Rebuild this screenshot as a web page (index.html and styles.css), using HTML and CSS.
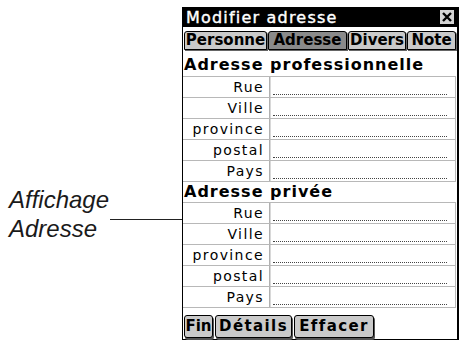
FILE: index.html
```html
<!DOCTYPE html>
<html lang="fr">
<head>
<meta charset="utf-8">
<title>Modifier adresse</title>
<link rel="stylesheet" href="styles.css">
</head>
<body>
<div class="page">
  <div class="note">
    <div class="note-line1"><span>Affichage</span><span class="leader"></span></div>
    <div class="note-line2">Adresse</div>
  </div>
  <div class="panel">
    <div class="titlebar">
      <span class="title">Modifier adresse</span>
      <svg class="close" width="14" height="14" viewBox="0 0 14 14"><rect x="0" y="0" width="14" height="14" fill="#d4d4d4"/><path d="M3 3 L11 11 M11 3 L3 11" stroke="#000" stroke-width="2.4"/></svg>
    </div>
    <div class="tabs">
      <div class="tab t1">Personne</div>
      <div class="tab t2 active">Adresse</div>
      <div class="tab t3">Divers</div>
      <div class="tab t4">Note</div>
    </div>
    <div class="section-head first">Adresse professionnelle</div>
    <div class="rows">
      <div class="row"><div class="label">Rue</div><div class="value"><span class="dots"></span></div></div>
      <div class="row"><div class="label">Ville</div><div class="value"><span class="dots"></span></div></div>
      <div class="row"><div class="label">province</div><div class="value"><span class="dots"></span></div></div>
      <div class="row"><div class="label">postal</div><div class="value"><span class="dots"></span></div></div>
      <div class="row"><div class="label">Pays</div><div class="value"><span class="dots"></span></div></div>
    </div>
    <div class="section-head">Adresse privée</div>
    <div class="rows">
      <div class="row"><div class="label">Rue</div><div class="value"><span class="dots"></span></div></div>
      <div class="row"><div class="label">Ville</div><div class="value"><span class="dots"></span></div></div>
      <div class="row"><div class="label">province</div><div class="value"><span class="dots"></span></div></div>
      <div class="row"><div class="label">postal</div><div class="value"><span class="dots"></span></div></div>
      <div class="row"><div class="label">Pays</div><div class="value"><span class="dots"></span></div></div>
    </div>
    <div class="buttons">
      <div class="btn b1">Fin</div>
      <div class="btn b2">Détails</div>
      <div class="btn b3">Effacer</div>
    </div>
  </div>
</div>
</body>
</html>
```
FILE: styles.css
```css
html, body {
  margin: 0;
  padding: 0;
  background: #fff;
}
.page {
  display: flex;
  width: 462px;
  height: 345px;
}
.note {
  width: 182px;
  padding-top: 186px;
  box-sizing: border-box;
  font-family: "Liberation Sans", Arial, sans-serif;
  font-style: italic;
  font-size: 24px;
  color: #1a1a1a;
}
.note-line1 {
  display: flex;
  align-items: flex-end;
  padding-left: 9px;
  height: 28px;
}
.leader {
  flex: 1;
  height: 1px;
  background: #222;
  margin-left: 1px;
  margin-bottom: -6px;
}
.note-line2 {
  padding-left: 9px;
  margin-top: 1px;
}
.panel {
  margin-top: 7px;
  width: 277px;
  height: 333px;
  box-sizing: border-box;
  border-left: 1px solid #000;
  border-right: 2px solid #000;
  border-bottom: 1px solid #000;
  display: flex;
  flex-direction: column;
  font-family: "DejaVu Sans", sans-serif;
  color: #000;
}
.titlebar {
  height: 20px;
  background: #000;
  color: #fff;
  display: flex;
  align-items: center;
  justify-content: space-between;
  padding: 0 3px 0 3px;
}
.title {
  font-size: 16px;
  letter-spacing: 1.2px;
  -webkit-text-stroke: 0.4px #fff;
}
.close {
  display: block;
}
.tabs {
  display: flex;
  gap: 1px;
  margin-top: 4px;
  padding-left: 1px;
  height: 19px;
}
.tab {
  box-sizing: border-box;
  height: 19px;
  border: 1px solid #000;
  border-radius: 3px 3px 0 0;
  background: #cacaca;
  font-weight: bold;
  font-size: 15px;
  line-height: 17px;
  text-align: center;
  box-shadow: 1px 1px 0 #666;
  white-space: nowrap;
}
.tab.active {
  background: #8a8a8a;
}
.t1 { width: 83px; }
.t2 { width: 79px; }
.t3 { width: 58px; }
.t4 { width: 49px; }
.section-head {
  font-weight: bold;
  font-size: 16px;
  letter-spacing: 1px;
  padding-left: 1px;
  height: 20px;
  line-height: 20px;
}
.section-head.first {
  height: 26px;
  line-height: 30px;
}
.rows {
  display: flex;
  flex-direction: column;
  margin-right: 1px;
  border-right: 1px solid #b8b8b8;
  border-top: 1px solid #b8b8b8;
}
.row {
  display: flex;
  height: 21px;
  box-sizing: border-box;
  border-bottom: 1px solid #b8b8b8;
}
.label {
  width: 87px;
  box-sizing: border-box;
  border-right: 1px solid #b0b0b0;
  text-align: right;
  padding-right: 5px;
  font-size: 14px;
  letter-spacing: 1.4px;
  line-height: 20px;
}
.value {
  flex: 1;
  border-left: 1px solid #d8d8d8;
  display: flex;
  align-items: flex-end;
  padding: 0 8px 2px 2px;
}
.dots {
  flex: 1;
  height: 0;
  border-bottom: 1px dotted #444;
}
.buttons {
  display: flex;
  gap: 2px;
  margin-top: 7px;
  padding-left: 1px;
}
.btn {
  box-sizing: border-box;
  height: 23px;
  border: 1px solid #000;
  border-radius: 3px;
  background: #cacaca;
  font-weight: bold;
  font-size: 15px;
  letter-spacing: 1.4px;
  line-height: 21px;
  text-align: center;
  box-shadow: 1px 2px 0 #555;
  white-space: nowrap;
}
.b1 { width: 29px; letter-spacing: 0; }
.b2 { width: 77px; }
.b3 { width: 80px; }
```
